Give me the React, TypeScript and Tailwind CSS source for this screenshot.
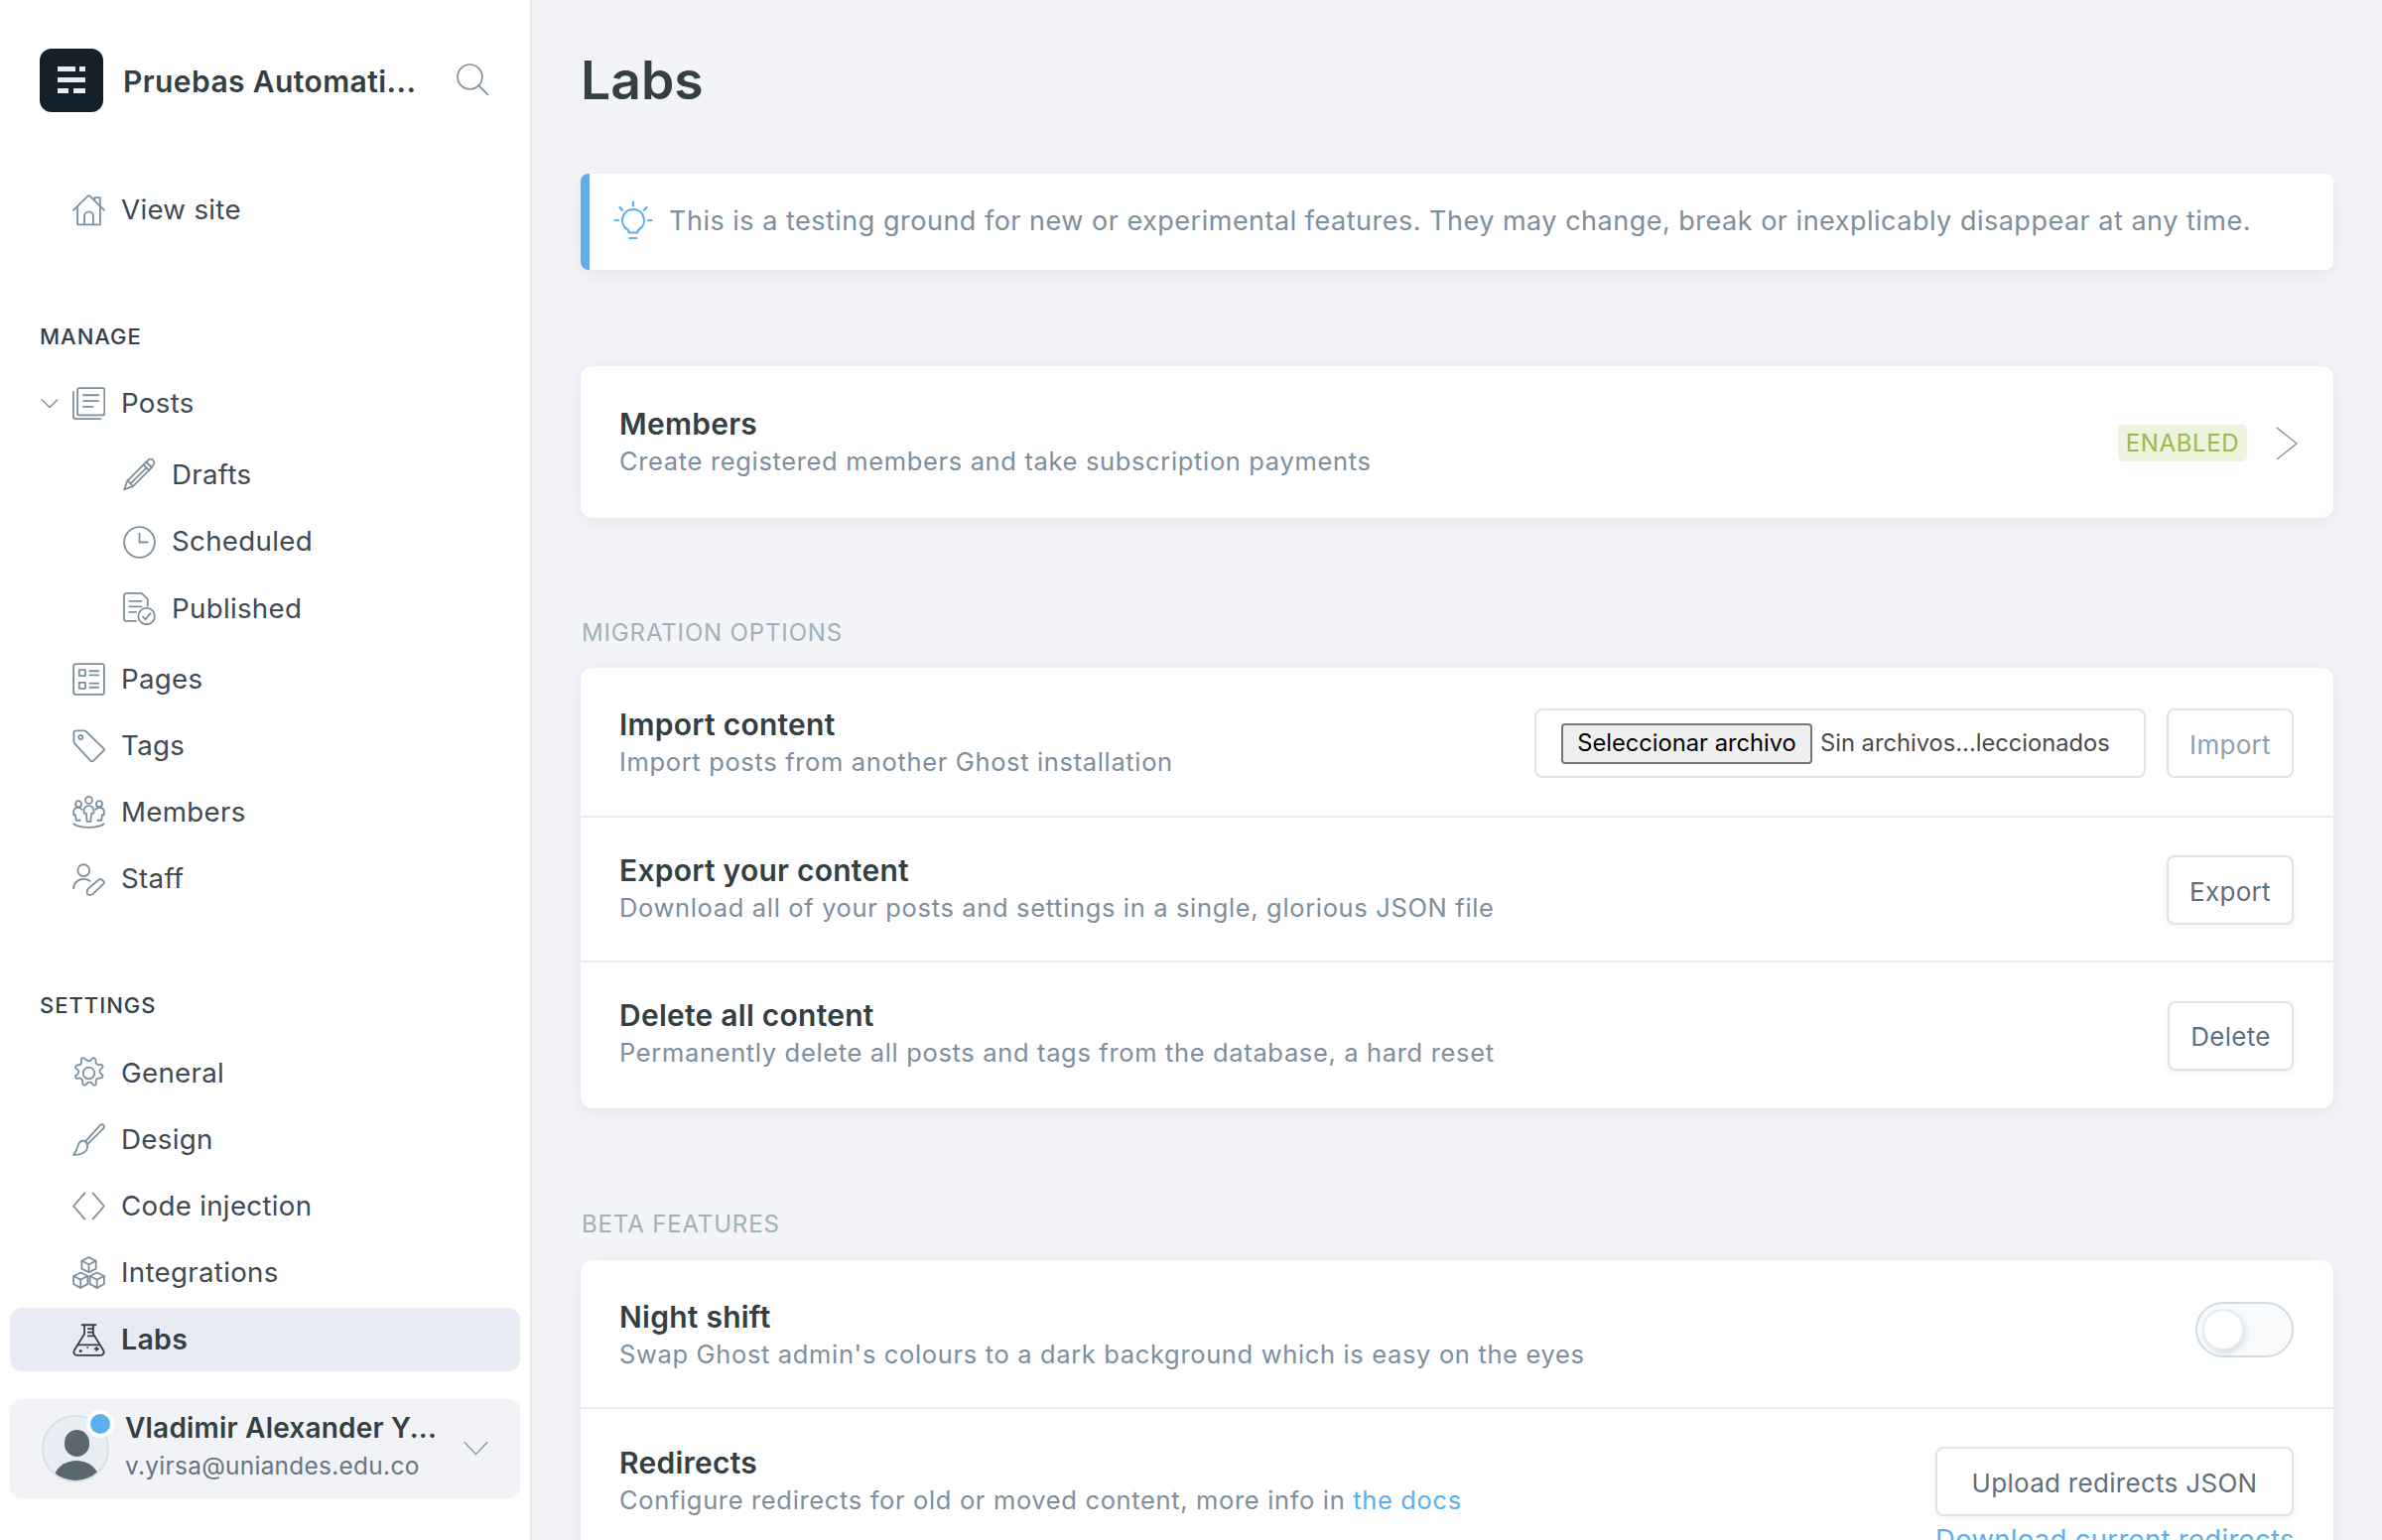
import React from "react";

type IconProps = { className?: string; children: React.ReactNode; sw?: number };
function Ic({ className = "w-[33px] h-[33px] text-[#7c8f9c]", children, sw = 1.3 }: IconProps) {
  return (
    <svg viewBox="0 0 24 24" fill="none" stroke="currentColor" strokeWidth={sw} strokeLinecap="round" strokeLinejoin="round" className={`shrink-0 ${className}`}>
      {children}
    </svg>
  );
}

const icons: Record<string, React.ReactNode> = {
  home: (
    <>
      <path d="M.7 12.200 11.200 1.900c.5-.4 1.100-.4 1.600 0l10.500 10.300" />
      <path d="M16.200 4.600V3h4v5.200" />
      <path d="M3.700 10.200v12.600h16.600V10.200" />
      <path d="M8.800 22.800v-6.300a3.200 3.200 0 0 1 6.400 0v6.300" />
    </>
  ),
  posts: (
    <>
      <rect x="3.700" y=".8" width="19.800" height="19.800" rx="1.400" />
      <path d="M.7 3.600v18.200c0 .9.700 1.600 1.600 1.600h18.400" />
      <path d="M8 6h11M8 10.200h11M8 14.400h7" />
    </>
  ),
  drafts: (
    <>
      <path d="M16.900 2.700 20.900 6.700 7.200 20.400l-6.400 2.400 2.400-6.400z" />
      <path d="M18.300 1.300c1.100-1 2.700-1 3.700 0 1 1 1 2.700 0 3.700l-1.100 1.700-4-4z" />
      <path d="M15 4.600l4 4M3.200 16l4 4.400M5.500 18.500 17 7" />
    </>
  ),
  clock: (
    <>
      <circle cx="12" cy="12" r="11.200" />
      <path d="M12 5.500V12h6" />
    </>
  ),
  published: (
    <>
      <path d="M9.500 21H2.300c-.9 0-1.600-.7-1.600-1.600V2.300C.7 1.400 1.400.7 2.300.7H13c.6 0 1 .2 1.400.6l3.100 3.200c.4.400.6.900.6 1.400v4" />
      <path d="M4.500 6.500h9M4.500 10.500h9M4.500 14.500h5" />
      <circle cx="17.200" cy="17.400" r="6" />
      <path d="m14.400 17.800 2 2 3.600-4.400" />
    </>
  ),
  pages: (
    <>
      <rect x=".8" y=".8" width="22.400" height="22.400" rx="1.600" />
      <rect x="5" y="5.200" width="4.400" height="4.400" />
      <rect x="5" y="14.400" width="4.400" height="4.400" />
      <path d="M12.600 6h6.400M12.600 9h6.400M12.600 15h6.400M12.600 18h6.400" />
    </>
  ),
  tags: (
    <>
      <path d="M1 2.400C1 1.600 1.600 1 2.400 1h6.200c.5 0 1 .2 1.300.5l13 12.600c.4.400.4 1 0 1.400l-7.900 7.900c-.4.400-1 .4-1.400 0L1.500 10.300c-.3-.3-.5-.8-.5-1.200z" />
      <circle cx="6" cy="5.800" r="1.500" />
    </>
  ),
  members: (
    <>
      <circle cx="12" cy="3.200" r="2.500" />
      <circle cx="4.400" cy="6" r="2.200" />
      <circle cx="19.600" cy="6" r="2.200" />
      <path d="M12 7.400c-2.400 0-3.600 1.600-3.600 3.400v2h1.700l.5 6h2.800l.5-6h1.700v-2c0-1.800-1.200-3.400-3.600-3.400z" />
      <path d="M7 10c-.6-.8-1.500-1.400-2.700-1.400C2 8.600.8 10.200.8 12v2h1.400l.5 4h3" />
      <path d="M17 10c.6-.8 1.500-1.400 2.700-1.400 2.300 0 3.500 1.600 3.500 3.400v2h-1.400l-.5 4h-3" />
      <path d="M.9 20.600c2.600 2 6.900 2.600 11.100 2.600s8.500-.6 11.100-2.600" />
    </>
  ),
  staff: (
    <>
      <circle cx="8.200" cy="5.200" r="4.300" />
      <path d="M.8 18.500c0-4 3.200-7 7.400-7 1.800 0 3.400.5 4.600 1.500" />
      <path d="m21.400 12 1.600 1.400c.4.400.4 1 0 1.400l-8.400 8c-.5.400-1.200.5-1.800.4l-1.600-.4c-.3-.1-.4-.3-.4-.6l-.1-1.900c0-.6.200-1.100.6-1.500l8.300-7c.5-.3 1.300-.2 1.800.2z" />
    </>
  ),
  gear: (
    <>
      <circle cx="12" cy="12" r="4.200" />
      <path d="M10.300 2.300a2.200 2.200 0 0 0 3.400 0l.8-1c.9-.9 2.400-.3 2.500.9l.1 1.300a2.200 2.200 0 0 0 2.400 2.400l1.300-.1c1.200-.1 1.900 1.400 1 2.300l-1 .8a2.200 2.200 0 0 0 0 3.400l1 .8c.9.900.3 2.400-.9 2.500l-1.300.1a2.200 2.200 0 0 0-2.400 2.400l.1 1.300c.1 1.200-1.400 1.900-2.300 1l-.8-1a2.200 2.200 0 0 0-3.400 0l-.8 1c-.9.900-2.400.3-2.500-.9l-.1-1.300a2.200 2.200 0 0 0-2.400-2.400l-1.300.1c-1.200.1-1.900-1.400-1-2.300l1-.8a2.200 2.200 0 0 0 0-3.400l-1-.8c-.9-.9-.3-2.400.9-2.500l1.300-.1A2.200 2.200 0 0 0 6.500 3.500l-.1-1.300C6.300 1 7.800.3 8.700 1.200z" />
    </>
  ),
  design: (
    <>
      <path d="M9.400 13.600 20.200 1.500c.8-.9 2-.9 2.600 0 .6.700.5 1.700-.2 2.400L11.200 15.200" />
      <path d="M9.600 13c-3.200-.8-4.800 1-5.400 3.200-.6 2.200-1.600 4.600-3.400 7 3.800 0 7.500-.8 9.200-3.200 1.200-1.700 1.900-3.800-.4-7z" />
    </>
  ),
  code: (
    <>
      <path d="M9 2.500.8 12 9 21.500" />
      <path d="M15 2.500 23.200 12 15 21.500" />
    </>
  ),
  integrations: (
    <>
      <path d="m12 .8 5.200 2.600v5.800L12 11.800 6.800 9.200V3.400z" />
      <path d="M6.800 3.400 12 6l5.200-2.600M12 6v5.800" />
      <path d="m6 12 5.200 2.600v5.800L6 23.200.8 20.400v-5.800z" />
      <path d="M.8 14.600 6 17.200l5.200-2.600M6 17.200v6" />
      <path d="m18 12 5.200 2.600v5.800L18 23.200l-5.200-2.800v-5.800z" />
      <path d="M12.800 14.600 18 17.200l5.200-2.600M18 17.200v6" />
    </>
  ),
  labs: (
    <>
      <path d="M7 .9h10M8.800.9v6.600L1.400 19.400c-1.100 1.800.1 3.800 2.100 3.800h17c2 0 3.200-2 2.100-3.800L15.200 7.500V.9" />
      <path d="M11.500 3.700h3.600M11.500 6.300h3.600M11.500 9h3.600" />
      <path d="M4.500 15.500h15" />
      <circle cx="6" cy="20" r=".5" />
      <path d="M11 17.500h.1M16.500 18.500h2.500M17.700 17.300v2.400" />
    </>
  ),
};

function NavItem({ icon, label, sub, active, chevron }: { icon: string; label: string; sub?: boolean; active?: boolean; chevron?: boolean }) {
  if (active) {
    return (
      <div className="mx-[10px] my-[2px] flex h-[63.200px] items-center rounded-[12px] bg-[#e8ebf3] pl-[63px]">
        <Ic className="h-[33px] w-[33px] text-[#343f44]">{icons[icon]}</Ic>
        <span className="ml-[16px] text-[28.500px] font-semibold tracking-[0.3px] text-[#343f44]">{label}</span>
      </div>
    );
  }
  return (
    <div className={`relative flex h-[67.200px] items-center ${sub ? "pl-[124px]" : "pl-[73px]"}`}>
      {chevron && (
        <svg viewBox="0 0 20 12" fill="none" stroke="#7c8f9c" strokeWidth="1.400" className="absolute left-[41px] h-[11px] w-[18px]">
          <path d="M1 1.500 10 10.500 19 1.500" />
        </svg>
      )}
      <Ic>{icons[icon]}</Ic>
      <span className="ml-[16px] text-[27.700px] tracking-[0.3px] text-[#3f4a52]">{label}</span>
    </div>
  );
}

function SideLabel({ children, className = "" }: { children: React.ReactNode; className?: string }) {
  return <div className={`ml-[40px] h-[28px] text-[22px] leading-[28px] font-medium tracking-[1px] text-[#343f44] ${className}`}>{children}</div>;
}

function Btn({ children, className = "", muted }: { children: React.ReactNode; className?: string; muted?: boolean }) {
  return (
    <button className={`flex h-[70px] shrink-0 items-center justify-center rounded-[8px] border-2 border-[#dde3ea] bg-white pt-[2px] text-[26px] tracking-[0.3px] ${muted ? "text-[#8fa0ab]" : "text-[#5f6f7b] shadow-[0_2px_6px_rgba(0,0,0,0.06)]"} ${className}`}>
      {children}
    </button>
  );
}

function Row({ title, desc, children, h, border = true }: { title: string; desc: React.ReactNode; children?: React.ReactNode; h: string; border?: boolean }) {
  return (
    <div className={`flex items-center justify-between pr-[40px] pl-[39px] ${h} ${border ? "border-b-2 border-[#e9edf1]" : ""}`}>
      <div className="flex flex-col">
        <div className="text-[30px] leading-[38px] font-semibold tracking-[0.25px] text-[#343f44]">{title}</div>
        <div className="text-[25.500px] leading-[38px] tracking-[0.65px] text-[#7d8e9c]">{desc}</div>
      </div>
      {children}
    </div>
  );
}

const cardCls = "rounded-[12px] bg-white shadow-[0_4px_18px_rgba(120,130,150,0.13)]";

export default function App() {
  return (
    <div className="flex h-[1552px] w-[2400px] overflow-hidden bg-[#f3f4f8] [font-family:Inter,sans-serif]">
      <aside className="flex h-full w-[536px] shrink-0 flex-col border-r-2 border-[#e9ebef] bg-white">
        <div className="mt-[49px] ml-[40px] flex h-[63px] items-center">
          <div className="flex h-[64px] w-[64px] shrink-0 flex-col items-center justify-center gap-[6px] rounded-[12px] bg-[#15212a]">
            <div className="flex gap-[4px]"><span className="h-[5px] w-[18px] bg-[#e9edf0]" /><span className="h-[5px] w-[6px] bg-[#e9edf0]" /></div>
            <div className="h-[5px] w-[28px] bg-[#e9edf0]" />
            <div className="flex gap-[5px]"><span className="h-[5px] w-[11px] bg-[#e9edf0]" /><span className="h-[5px] w-[12px] bg-[#e9edf0]" /></div>
          </div>
          <div className="ml-[20px] w-[300px] pt-[3px] text-[30px] font-semibold tracking-[0.4px] whitespace-nowrap text-[#343f44]">Pruebas Automati...</div>
          <svg viewBox="0 0 32 32" fill="none" stroke="#7c8f9c" strokeWidth="1.600" strokeLinecap="round" className="ml-[35px] h-[33px] w-[33px]">
            <circle cx="14" cy="13" r="12" />
            <path d="m22.500 21.500 9 9" />
          </svg>
        </div>
        <div className="mt-[66px]"><NavItem icon="home" label="View site" /></div>
        <SideLabel className="mt-[80px]">MANAGE</SideLabel>
        <div className="mt-[20px] flex flex-col">
          <NavItem icon="posts" label="Posts" chevron />
          <div className="mt-[5px]" />
          <NavItem icon="drafts" label="Drafts" sub />
          <NavItem icon="clock" label="Scheduled" sub />
          <NavItem icon="published" label="Published" sub />
          <div className="mt-[4px]" />
          <NavItem icon="pages" label="Pages" />
          <NavItem icon="tags" label="Tags" />
          <NavItem icon="members" label="Members" />
          <NavItem icon="staff" label="Staff" />
        </div>
        <SideLabel className="mt-[79px]">SETTINGS</SideLabel>
        <div className="mt-[21px] flex flex-col">
          <NavItem icon="gear" label="General" />
          <NavItem icon="design" label="Design" />
          <NavItem icon="code" label="Code injection" />
          <NavItem icon="integrations" label="Integrations" />
          <NavItem icon="labs" label="Labs" active />
        </div>
        <div className="mx-[10px] mt-[26px] flex h-[100px] items-center rounded-[12px] bg-[#f1f3f7] pl-[32px]">
          <div className="relative h-[68px] w-[68px] shrink-0">
            <div className="relative h-full w-full overflow-hidden rounded-full border-2 border-[#d8e0e7] bg-[#e8edf3]">
              <div className="absolute top-[13px] left-[21px] h-[27px] w-[25px] rounded-full bg-[#5b676e]" />
              <div className="absolute top-[44px] left-[10px] h-[40px] w-[46px] rounded-t-[50%] bg-[#5b676e]" />
            </div>
            <div className="absolute -top-[5px] -right-[5px] h-[28px] w-[28px] rounded-full border-4 border-white bg-[#5bb0ec]" />
          </div>
          <div className="ml-[16px] flex w-[318px] flex-col pb-[6px]">
            <div className="text-[28px] leading-[36px] font-semibold tracking-[0.2px] whitespace-nowrap text-[#343f44]">Vladimir Alexander Y...</div>
            <div className="mt-[4px] text-[24.400px] leading-[32px] tracking-[0.3px] whitespace-nowrap text-[#66757f]">v.yirsa@uniandes.edu.co</div>
          </div>
          <svg viewBox="0 0 24 14" fill="none" stroke="#7c8f9c" strokeWidth="1.100" className="ml-[23px] h-[15px] w-[25px]">
            <path d="M.8 1 12 13 23.200 1" />
          </svg>
        </div>
      </aside>
      <main className="min-w-0 flex-1 overflow-hidden px-[49px]">
        <h1 className="mt-[51px] h-[60px] text-[53.500px] leading-[60px] font-semibold text-[#343f44]">Labs</h1>
        <div className="mt-[64px] flex h-[97px] items-center overflow-hidden rounded-[8px] border-l-[9px] border-[#5bb0ec] bg-white pl-[24px] shadow-[0_4px_18px_rgba(120,130,150,0.13)]">
          <svg viewBox="0 0 40 40" fill="none" stroke="#5bb0ec" strokeWidth="2.200" strokeLinecap="round" strokeLinejoin="round" className="mb-[4px] h-[40px] w-[40px] shrink-0">
            <path d="M20 1.500v4M6.500 7l2.500 2.800M33.500 7 31 9.800M1.500 20h3.500M35 20h3.500" />
            <path d="M20 9a11 11 0 0 0-6 20.200c1 .7 1.700 1.800 1.700 3v.3h8.600v-.3c0-1.200.7-2.300 1.700-3A11 11 0 0 0 20 9z" />
            <path d="M16.500 38h7" />
          </svg>
          <div className="ml-[16px] text-[27px] tracking-[0.5px] whitespace-nowrap text-[#7d8e9c]">This is a testing ground for new or experimental features. They may change, break or inexplicably disappear at any time.</div>
        </div>
        <div className={`mt-[97px] ${cardCls}`}>
          <div className="flex h-[153px] items-center justify-between pr-[36px] pl-[39px]">
            <div className="flex flex-col">
              <div className="text-[30px] leading-[38px] font-semibold tracking-[0.25px] text-[#343f44]">Members</div>
              <div className="text-[25.500px] leading-[38px] tracking-[0.65px] text-[#7d8e9c]">Create registered members and take subscription payments</div>
            </div>
            <div className="flex items-center pt-[2px]">
              <span className="flex h-[37px] w-[130px] items-center justify-center rounded-[5px] bg-[#edf4dd] pt-[1px] text-[24px] tracking-[0.6px] text-[#9bb950]">ENABLED</span>
              <svg viewBox="0 0 22 34" fill="none" stroke="#7c8f9c" strokeWidth="1.300" className="ml-[29px] h-[34px] w-[22px]">
                <path d="M1 1 21 17 1 33" />
              </svg>
            </div>
          </div>
        </div>
        <div className="mt-[102px] ml-[1px] h-[28px] text-[24px] leading-[28px] tracking-[0.85px] text-[#9fb0bb]">MIGRATION OPTIONS</div>
        <div className={`mt-[21px] ${cardCls}`}>
          <Row h="h-[151px] pt-[3px]" title="Import content" desc="Import posts from another Ghost installation">
            <div className="flex gap-[21px]">
              <div className="flex h-[70px] w-[616px] items-center rounded-[8px] border-2 border-[#dde3ea] pl-[25px]">
                <button className="flex h-[41px] w-[253px] items-center justify-center rounded-[4px] border-2 border-[#767676] bg-[#efefef] text-[23.700px] text-black">Seleccionar archivo</button>
                <span className="ml-[8px] text-[23.700px] whitespace-nowrap text-[#4a4a4a]">Sin archivos...leccionados</span>
              </div>
              <Btn muted className="w-[128px]">Import</Btn>
            </div>
          </Row>
          <Row h="h-[146px]" title="Export your content" desc="Download all of your posts and settings in a single, glorious JSON file">
            <Btn className="mt-[2px] w-[128px]">Export</Btn>
          </Row>
          <Row h="h-[147px] pb-[3px]" border={false} title="Delete all content" desc="Permanently delete all posts and tags from the database, a hard reset">
            <Btn className="mt-[3px] w-[127px]">Delete</Btn>
          </Row>
        </div>
        <div className="mt-[103px] ml-[1px] h-[28px] text-[24px] leading-[28px] tracking-[0.85px] text-[#9fb0bb]">BETA FEATURES</div>
        <div className={`mt-[22px] ${cardCls}`}>
          <Row h="h-[150px] pt-[3px]" title="Night shift" desc="Swap Ghost admin's colours to a dark background which is easy on the eyes">
            <div className="relative mb-[11px] h-[56px] w-[99px] rounded-full border-2 border-[#cfdbe5] bg-[#f8fafb]">
              <div className="absolute top-[5px] left-[5px] h-[42px] w-[42px] rounded-full border-2 border-[#e3ebf1] bg-white shadow-[2px_3px_5px_rgba(100,120,140,0.2)]" />
            </div>
          </Row>
          <div className="flex h-[160px] justify-between pr-[40px] pl-[39px]">
            <div className="flex flex-col pt-[35px]">
              <div className="text-[30px] leading-[38px] font-semibold tracking-[0.25px] text-[#343f44]">Redirects</div>
              <div className="text-[25.500px] leading-[38px] tracking-[0.65px] text-[#7d8e9c]">Configure redirects for old or moved content, more info in <span className="text-[#5bb0ec]">the docs</span></div>
            </div>
            <div className="flex w-[361px] flex-col pt-[38px]">
              <Btn className="w-[361px]">Upload redirects JSON</Btn>
              <div className="mt-[3px] text-[27.500px] tracking-[0.3px] whitespace-nowrap text-[#5bb0ec]">Download current redirects</div>
            </div>
          </div>
        </div>
      </main>
    </div>
  );
}
